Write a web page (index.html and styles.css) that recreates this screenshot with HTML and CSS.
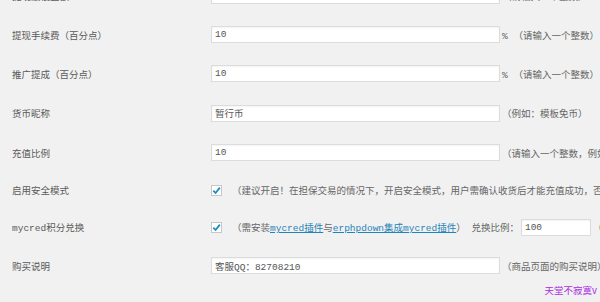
FILE: index.html
```html
<!DOCTYPE html>
<html lang="zh-CN">
<head>
<meta charset="utf-8">
<title>设置</title>
<link rel="stylesheet" href="styles.css">
</head>
<body>
<div class="page">
  <div class="form">
    <div class="row r0">
      <div class="label">提现最低金额</div>
      <div class="field"><span class="input">10</span><span class="note">（请输入一个整数）</span></div>
    </div>
    <div class="row">
      <div class="label">提现手续费（百分点）</div>
      <div class="field"><span class="input">10</span><span class="note">% （请输入一个整数）</span></div>
    </div>
    <div class="row">
      <div class="label">推广提成（百分点）</div>
      <div class="field"><span class="input">10</span><span class="note">% （请输入一个整数）</span></div>
    </div>
    <div class="row tall">
      <div class="label">货币昵称</div>
      <div class="field"><span class="input">暂行币</span><span class="note">（例如：模板免币）</span></div>
    </div>
    <div class="row">
      <div class="label">充值比例</div>
      <div class="field"><span class="input">10</span><span class="note">（请输入一个整数，例如：1元=10暂行币）</span></div>
    </div>
    <div class="row check">
      <div class="label">启用安全模式</div>
      <div class="field"><span class="box"><svg viewBox="0 0 11 11" width="11" height="11"><path d="M2.3 5.6 L4.6 8 L8.8 2.6" fill="none" stroke="#1e8cbe" stroke-width="1.8"/></svg></span><span class="text">（建议开启！在担保交易的情况下，开启安全模式，用户需确认收货后才能充值成功，否则充值失败）</span></div>
    </div>
    <div class="row check2">
      <div class="label">mycred积分兑换</div>
      <div class="field"><span class="box"><svg viewBox="0 0 11 11" width="11" height="11"><path d="M2.3 5.6 L4.6 8 L8.8 2.6" fill="none" stroke="#1e8cbe" stroke-width="1.8"/></svg></span><span class="text">（需安装<a href="#">mycred插件</a>与<a href="#">erphpdown集成mycred插件</a>） 兑换比例：</span><span class="input small">100</span><span class="note">（</span></div>
    </div>
    <div class="row">
      <div class="label">购买说明</div>
      <div class="field"><span class="input">客服QQ：82708210</span><span class="note">（商品页面的购买说明）</span></div>
    </div>
  </div>
  <div class="mark">天堂不寂寞v</div>
</div>
</body>
</html>
```
FILE: styles.css
```css
html, body {
  margin: 0;
  padding: 0;
  background: #f1f1f1;
}
body {
  width: 600px;
  height: 302px;
  overflow: hidden;
  font-family: "Liberation Mono", "Noto Sans CJK SC", monospace;
  font-size: 9.5px;
  color: #555;
}
.page {
  position: relative;
  width: 600px;
  height: 302px;
  overflow: hidden;
}
.form {
  display: flex;
  flex-direction: column;
  margin-top: -24px;
}
.row {
  display: flex;
  align-items: center;
  height: 39px;
  padding-left: 12px;
  white-space: nowrap;
}
.row.tall { height: 40px; }
.row.check { height: 36px; }
.row.check2 { height: 38px; }
.label {
  width: 199px;
  flex: none;
  color: #5a5a5a;
}
.field {
  display: flex;
  align-items: center;
  white-space: nowrap;
}
.input {
  box-sizing: border-box;
  width: 289px;
  height: 17px;
  flex: none;
  background: #fff;
  border: 1px solid #dcdcdc;
  box-shadow: inset 0 1px 2px rgba(0,0,0,0.05);
  padding-left: 3px;
  display: flex;
  align-items: center;
  color: #555;
}
.input.small {
  width: 70px;
  margin-left: 2px;
}
.note {
  margin-left: 2px;
  color: #666;
}
.box {
  box-sizing: border-box;
  width: 11px;
  height: 11px;
  flex: none;
  background: #fff;
  border: 1px solid #c4c8cc;
  display: flex;
  align-items: center;
  justify-content: center;
  margin-right: 10px;
}
.box svg { display: block; flex: none; }
.text { color: #666; }
.text a {
  color: #1f84b8;
  text-decoration: underline;
}
.mark {
  position: absolute;
  right: 3px;
  bottom: 5px;
  font-size: 9.5px;
  color: #a82be0;
  font-family: "Noto Sans CJK SC", sans-serif;
}
```
